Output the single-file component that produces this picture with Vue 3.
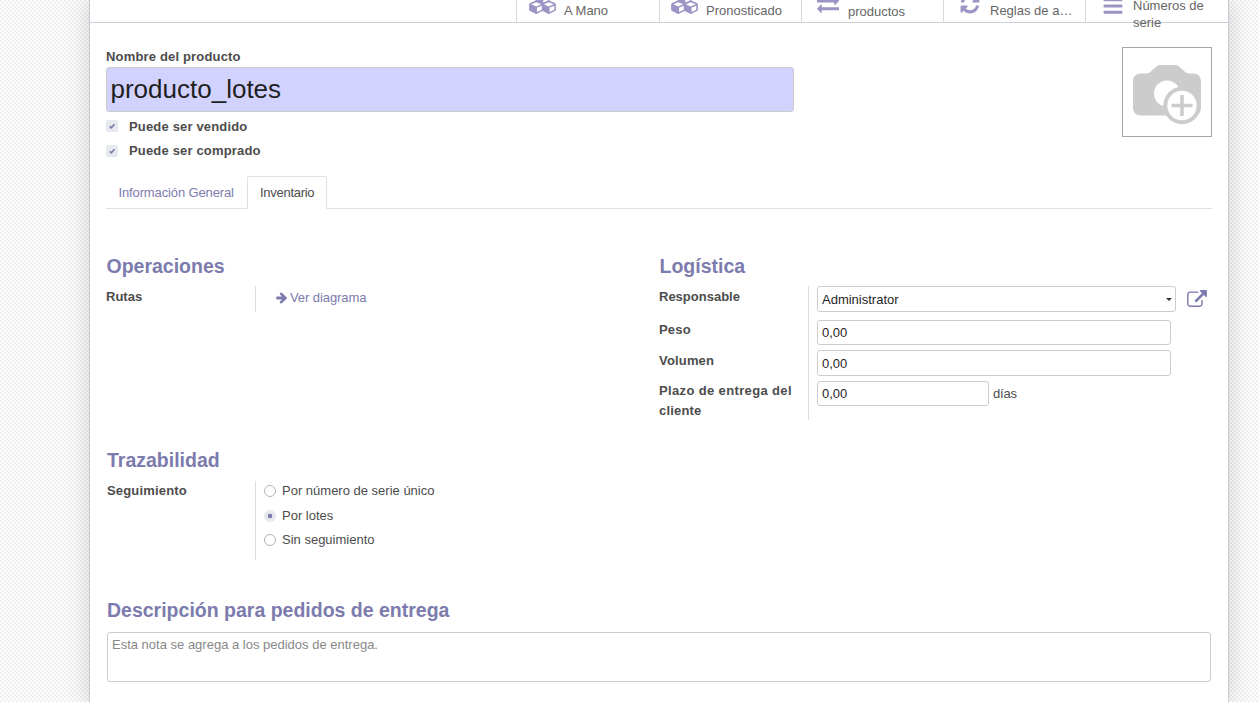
<script setup>
const cubes = 'M640 1632l384-192v-314l-384 164v342zM576 1178l404-173-404-173-404 173zM1664 1632l384-192v-314l-384 164v342zM1600 1178l404-173-404-173-404 173zM1152 865l384-165v-266l-384 164v267zM1088 486l441-189-441-189-441 189zM2176 1024v416q0 36-19 67t-52 47l-448 224q-25 14-57 14t-57-14l-448-224q-4-2-7-4-2 2-7 4l-448 224q-25 14-57 14t-57-14l-448-224q-33-16-52-47t-19-67v-416q0-38 21.5-70t56.5-48l434-186v-400q0-38 21.5-70t56.5-48l448-192q23-10 50-10t50 10l448 192q35 16 56.5 48t21.5 70v400l434 186q36 16 57 48t21 70z'
const exchange = 'M1792 1184v192q0 13-9.5 22.5t-22.5 9.5h-1376v192q0 13-9.5 22.5t-22.5 9.5q-12 0-24-10l-319-320q-9-9-9-22 0-14 9-23l320-320q9-9 23-9 13 0 22.5 9.5t9.5 22.5v192h1376q13 0 22.5 9.5t9.5 22.5zm0-544q0 14-9 23l-320 320q-9 9-23 9-13 0-22.5-9.5t-9.5-22.5v-192h-1376q-13 0-22.5-9.5t-9.5-22.5v-192q0-13 9.5-22.5t22.5-9.5h1376v-192q0-14 9-23t23-9q12 0 24 10l319 319q9 9 9 23z'
const refresh = 'M1639 1056q0 5-1 7-64 268-268 434.5t-478 166.5q-146 0-282.5-55t-243.5-157l-129 129q-19 19-45 19t-45-19-19-45v-448q0-26 19-45t45-19h448q26 0 45 19t19 45-19 45l-137 137q71 66 161 102t187 36q134 0 250-65t186-179q11-17 53-117 8-23 30-23h192q13 0 22.5 9.5t9.5 22.5zm25-800v448q0 26-19 45t-45 19h-448q-26 0-45-19t-19-45 19-45l138-138q-148-137-349-137-134 0-250 65t-186 179q-11 17-53 117-8 23-30 23h-199q-13 0-22.5-9.5t-9.5-22.5v-7q65-268 270-434.5t480-166.5q146 0 284 55.5t245 156.5l130-129q19-19 45-19t45 19 19 45z'
const bars = 'M192 1280h1408q64 0 64 64v128q0 64-64 64h-1408q-64 0-64-64v-128q0-64 64-64zM192 768h1408q64 0 64 64v128q0 64-64 64h-1408q-64 0-64-64v-128q0-64 64-64zM192 256h1408q64 0 64 64v128q0 64-64 64h-1408q-64 0-64-64v-128q0-64 64-64z'

const stats = [
  { key: 'onhand', icon: cubes, box: '0 0 2176 1792', label: 'A Mano' },
  { key: 'forecast', icon: cubes, box: '0 0 2176 1792', label: 'Pronosticado' },
  { key: 'moves', icon: exchange, box: '0 0 1792 1792', label: 'productos' },
  { key: 'rules', icon: refresh, box: '0 0 1792 1792', label: 'Reglas de a…' },
  { key: 'serials', icon: bars, box: '0 0 1792 1792', label: 'Números de serie' }
]
const checks = ['Puede ser vendido', 'Puede ser comprado']
const tracking = ['Por número de serie único', 'Por lotes', 'Sin seguimiento']
const selected = 'Por lotes'
</script>

<template>
  <div class="page">
    <main class="sheet">
      <div class="stats">
        <div v-for="s in stats" :key="s.key" class="stat" :class="s.key">
          <svg class="stat-icon" :viewBox="s.box"><path :d="s.icon" /></svg>
          <span class="stat-label">{{ s.label }}</span>
        </div>
      </div>

      <header class="title-row">
        <div class="title">
          <label class="bold">Nombre del producto</label>
          <div class="name-input">producto_lotes</div>
          <div v-for="c in checks" :key="c" class="check-row">
            <span class="checkbox">
              <svg viewBox="0 0 12 12"><path d="M3.7 6.3 5.3 7.8 8.5 4.3" /></svg>
            </span>
            <span class="bold">{{ c }}</span>
          </div>
        </div>
        <div class="photo">
          <svg viewBox="0 0 88 88">
            <path class="cam" d="M18 25.5h5c3 0 5-2 7-4l3-2.600c1.500-1.500 2.500-2 4.500-2h14.500c2 0 3 .500 4.500 2l3 2.600c2 2 4 4 7 4h3.500c5 0 8 3 8 8v26c0 5-3 8-8 8h-52c-5 0-8-3-8-8v-26c0-5 3-8 8-8z" />
            <circle class="hole" cx="44" cy="45.500" r="13" />
            <circle class="cam" cx="59" cy="57.500" r="18.700" />
            <circle class="hole" cx="59" cy="57.500" r="14.700" />
            <path class="cam" d="M57.200 47h3.600v8.700h8.700v3.600h-8.700v8.700h-3.600v-8.700h-8.700v-3.600h8.700z" />
          </svg>
        </div>
      </header>

      <nav class="tabs">
        <a class="tab">Información General</a>
        <a class="tab active">Inventario</a>
      </nav>

      <div class="columns">
        <section>
          <h2>Operaciones</h2>
          <div class="group routes">
            <div class="labels"><label class="bold tight">Rutas</label></div>
            <div class="fields">
              <a class="link">
                <svg viewBox="128 128 1472 1664"><path d="M1600 960q0 54-37 91l-651 651q-39 37-91 37-51 0-90-37l-75-75q-38-38-38-91t38-91l293-293h-704q-52 0-84.500-37.500t-32.500-90.500v-128q0-53 32.500-90.500t84.500-37.500h704l-293-294q-38-36-38-90t38-90l75-75q38-38 90-38 53 0 91 38l651 651q37 35 37 90z" /></svg>
                <span>Ver diagrama</span>
              </a>
            </div>
          </div>
        </section>

        <section>
          <h2>Logística</h2>
          <div class="group logistics">
            <div class="labels">
              <label class="bold tight">Responsable</label>
              <label class="bold">Peso</label>
              <label class="bold">Volumen</label>
              <label class="bold loose">Plazo de entrega del <span>cliente</span></label>
            </div>
            <div class="fields">
              <div class="field-row">
                <div class="input select"><span>Administrator</span><i class="caret"></i></div>
                <svg class="external" viewBox="0 0 1792 1536"><path d="M1408 928v320q0 119-84.500 203.500t-203.500 84.500h-832q-119 0-203.500-84.500t-84.500-203.500v-832q0-119 84.500-203.500t203.500-84.500h704q14 0 23 9t9 23v64q0 14-9 23t-23 9h-704q-66 0-113 47t-47 113v832q0 66 47 113t113 47h832q66 0 113-47t47-113v-320q0-14 9-23t23-9h64q14 0 23 9t9 23zm384-864v512q0 26-19 45t-45 19-45-19l-176-176-652 652q-10 10-23 10t-23-10l-114-114q-10-10-10-23t10-23l652-652-176-176q-19-19-19-45t19-45 45-19h512q26 0 45 19t19 45z" /></svg>
              </div>
              <div class="field-row"><div class="input">0,00</div></div>
              <div class="field-row"><div class="input tall">0,00</div></div>
              <div class="field-row"><div class="input short">0,00</div><span class="unit">días</span></div>
            </div>
          </div>
        </section>
      </div>

      <section class="trace">
        <h2>Trazabilidad</h2>
        <div class="group tracking">
          <div class="labels"><label class="bold">Seguimiento</label></div>
          <div class="fields">
            <div v-for="t in tracking" :key="t" class="radio-row">
              <span class="radio" :class="{ on: t === selected }"></span>
              <span>{{ t }}</span>
            </div>
          </div>
        </div>
      </section>

      <section class="description">
        <h2>Descripción para pedidos de entrega</h2>
        <div class="textarea">Esta nota se agrega a los pedidos de entrega.</div>
      </section>
    </main>
  </div>
</template>

<style>
body {
  overflow: hidden;
}
</style>

<style scoped>
* {
  box-sizing: border-box;
}
.page {
  width: 1259px;
  height: 702px;
  overflow: hidden;
  padding: 0 30px 0 89px;
  background: repeating-conic-gradient(#ffffff 0 25%, #eeeeee 0 50%) 0 0 / 4px 4px;
  font-family: "Liberation Sans", Arial, sans-serif;
  font-size: 13px;
  line-height: 20px;
  color: #4c4c4c;
}
.sheet {
  width: 1140px;
  height: 702px;
  background: #fff;
  border: solid #c8c8d3;
  border-width: 0 1px;
  box-shadow: 0 0 22px rgba(0, 0, 0, 0.17);
}
.bold {
  font-weight: bold;
  letter-spacing: 0.17px;
}
.tight {
  letter-spacing: 0;
}
.loose {
  letter-spacing: 0.36px;
}
.loose span {
  letter-spacing: 0.19px;
}
.stats {
  display: flex;
  justify-content: flex-end;
  height: 23px;
  padding-right: 1px;
  border-bottom: 1px solid #cacfd8;
}
.stat {
  display: flex;
  align-items: flex-start;
  width: 142px;
  height: 22px;
  padding-left: 12px;
  border-left: 1px solid #d5dade;
  color: #666;
}
.onhand {
  width: 143px;
}
.stat-icon {
  flex: none;
  width: 22px;
  height: 22px;
  margin: -7.500px 9px 0 3px;
  fill: #9a95c4;
}
.onhand .stat-icon,
.forecast .stat-icon {
  width: 27px;
  margin: -8px 8px 0 0;
}
.forecast .stat-icon {
  margin-left: -1px;
}
.serials .stat-icon {
  margin: -5px 9.500px 0 3.500px;
}
.stat-label {
  margin-top: 1px;
  white-space: nowrap;
}
.moves .stat-label {
  margin-top: 2px;
}
.serials .stat-label {
  width: 80px;
  margin-top: -2px;
  line-height: 16.500px;
  white-space: normal;
}
.title-row {
  display: flex;
  justify-content: space-between;
  height: 153px;
  padding: 24px 16px 0;
}
.title {
  width: 688px;
}
.title > label {
  display: block;
  height: 20px;
}
.name-input {
  height: 45px;
  margin-bottom: 4px;
  padding-left: 3.500px;
  border: 1px solid #ccc;
  border-radius: 3px;
  background: #d2d2ff;
  color: #1f1f1f;
  font-size: 26px;
  line-height: 43px;
}
.check-row {
  display: flex;
  align-items: center;
  gap: 11px;
  height: 20px;
  margin-bottom: 4.500px;
}
.check-row:nth-of-type(2) .bold {
  padding-top: 2px;
}
.checkbox {
  width: 12px;
  height: 12px;
  border-radius: 2px;
  background: #e6e9ed;
}
.checkbox svg {
  display: block;
  fill: none;
  stroke: #7c7bad;
  stroke-width: 1.700;
}
.photo {
  width: 90px;
  height: 90px;
  border: 1px solid #a6a6a6;
}
.photo svg {
  display: block;
}
.cam {
  fill: #ccc;
}
.hole {
  fill: #fff;
}
.tabs {
  display: flex;
  height: 33px;
  margin: 0 16px;
  border-bottom: 1px solid #dee0e6;
}
.tab {
  height: 33px;
  padding: 6px 0 0 12px;
  border: 1px solid transparent;
  color: #7c7bad;
  white-space: nowrap;
}
.tab:first-child {
  width: 141px;
  padding-left: 11.500px;
  letter-spacing: -0.13px;
}
.tab.active {
  width: 80px;
  background: #fff;
  border-color: #dee0e6;
  border-bottom-color: #fff;
  border-radius: 2px 2px 0 0;
  color: #4c4c4c;
  letter-spacing: -0.28px;
}
.columns {
  display: grid;
  grid-template-columns: 553px 1fr;
  height: 225px;
  padding: 43px 0 0 16px;
}
h2 {
  height: 34px;
  margin: 0;
  padding-left: 0.500px;
  color: #7c7bad;
  font-size: 19.500px;
  line-height: 28px;
}
.group {
  display: grid;
  grid-template-columns: 149px 1fr;
}
.labels {
  display: flex;
  flex-direction: column;
  padding-top: 1px;
}
.fields {
  border-left: 1px solid #ddd;
}
.routes {
  height: 26px;
}
.link {
  display: flex;
  align-items: center;
  gap: 3px;
  padding: 2px 0 0 20px;
  color: #7c7bad;
}
.link svg {
  width: 11px;
  height: 12px;
  fill: #7c7bad;
}
.link span {
  letter-spacing: -0.08px;
}
.logistics {
  height: 134px;
}
.logistics .labels {
  display: grid;
  grid-template-rows: 33px 31px 30px 39px;
  padding-right: 10px;
}
.logistics .fields {
  display: grid;
  grid-template-rows: 34px 30px 31px 39px;
  padding-left: 8px;
}
.field-row {
  display: flex;
  align-items: flex-start;
}
.input {
  display: flex;
  align-items: center;
  width: 354px;
  height: 25px;
  padding: 0 4px;
  border: 1px solid #ccc;
  border-radius: 3px;
  color: #1f1f1f;
}
.input.tall {
  height: 26px;
  padding-top: 1px;
}
.short {
  width: 172px;
}
.input.select {
  justify-content: space-between;
  width: 359px;
  height: 26px;
  padding: 1px 3px 0 4px;
}
.caret {
  border: solid transparent;
  border-width: 3px 3px 0;
  border-top-color: #333;
}
.external {
  width: 20px;
  height: 17px;
  margin: 4px 0 0 11px;
  fill: #7c7bad;
}
.unit {
  margin: 3px 0 0 4px;
  letter-spacing: -0.15px;
}
.trace {
  height: 162px;
  padding: 12px 0 0 17px;
}
.trace h2,
.description h2 {
  padding-left: 0;
}
.tracking {
  grid-template-columns: 148px 1fr;
  height: 79px;
  margin-top: 1px;
}
.tracking .labels {
  padding-top: 0;
}
.tracking .fields {
  padding-left: 8px;
}
.radio-row {
  display: flex;
  align-items: center;
  gap: 6px;
  height: 20px;
  margin-bottom: 4.500px;
}
.radio {
  width: 12px;
  height: 12px;
  border: 1px solid #adb5bd;
  border-radius: 50%;
}
.radio.on {
  border: 0;
  background: radial-gradient(circle, #7c7bad 0 2px, #e6e9ed 2.600px);
}
.description {
  padding: 0 17px;
}
.textarea {
  height: 50px;
  margin-top: 2px;
  padding: 2px 4px;
  border: 1px solid #ccc;
  border-radius: 3px;
  color: #888;
}
</style>
